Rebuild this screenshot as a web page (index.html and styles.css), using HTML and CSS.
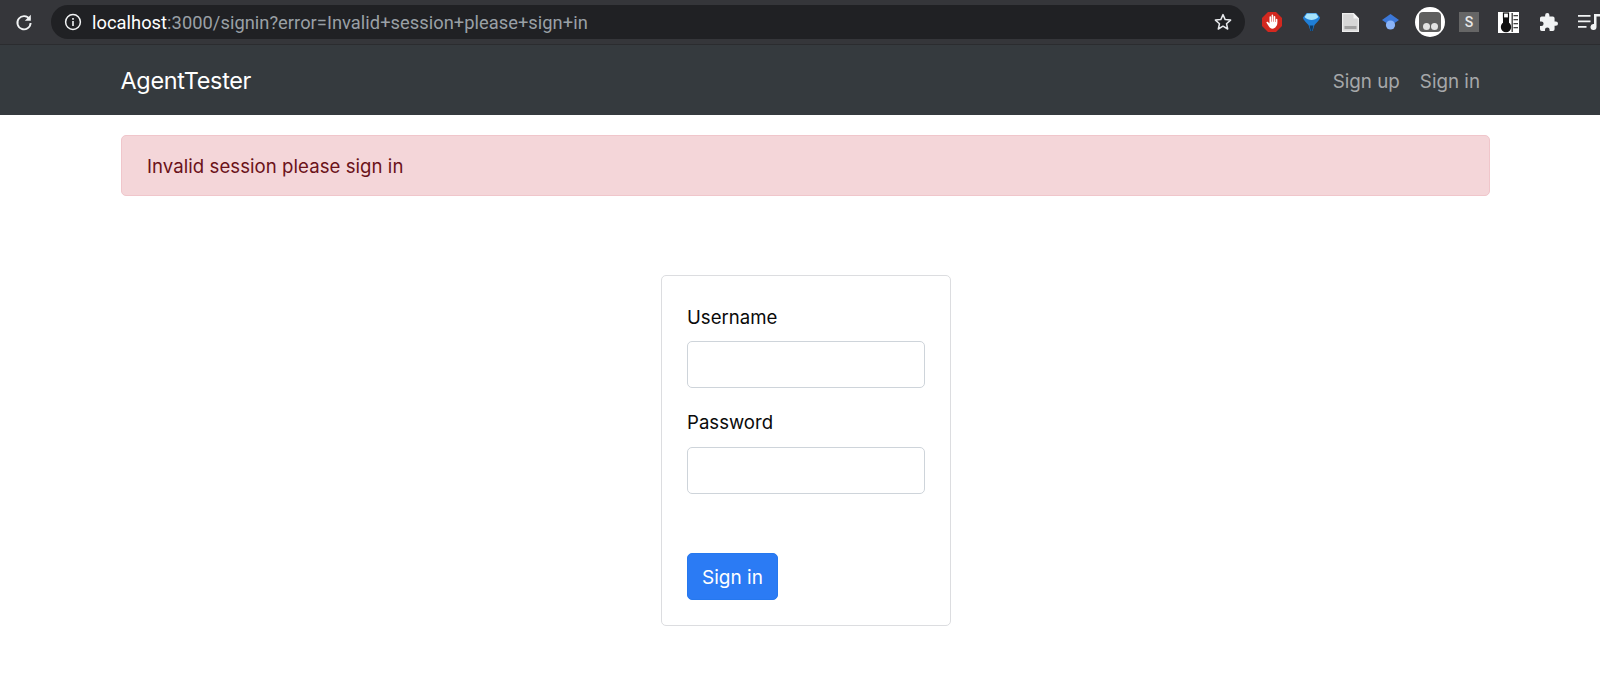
FILE: index.html
```html
<!DOCTYPE html>
<html lang="en">
<head>
<meta charset="utf-8">
<title>AgentTester</title>
<link rel="stylesheet" href="styles.css">
</head>
<body>
<div class="toolbar">
  <svg class="reload" width="20" height="20" viewBox="0 0 20 20"><path d="M15.6 7.2A6.6 6.6 0 1 0 16.6 11" fill="none" stroke="#f1f3f4" stroke-width="1.9"/><path d="M16.8 2.8v6h-6z" fill="#f1f3f4"/></svg>
  <div class="omnibox">
    <svg class="info" width="18" height="18" viewBox="0 0 18 18"><circle cx="9" cy="9" r="7.4" fill="none" stroke="#f1f3f4" stroke-width="1.5"/><rect x="8.2" y="8" width="1.6" height="5" fill="#f1f3f4"/><rect x="8.2" y="5" width="1.6" height="1.8" fill="#f1f3f4"/></svg>
    <div class="url"><span class="host">localhost</span>:3000/signin?error=Invalid+session+please+sign+in</div>
    <svg class="star" width="20" height="20" viewBox="0 0 20 20"><path d="M10 2.6l2.2 5 5.4.5-4.1 3.6 1.2 5.3L10 14.2 5.3 17l1.2-5.3L2.4 8.1l5.4-.5z" fill="none" stroke="#e8eaed" stroke-width="1.5" stroke-linejoin="round"/></svg>
  </div>
  <div class="extensions">
    <svg class="ext ext-stop" width="20" height="20" viewBox="0 0 20 20"><path d="M6 0h8l6 6v8l-6 6H6l-6-6V6z" fill="#d3281f"/><path d="M14 14.500c1-1 1.400-2.500 1.400-4.500V7.500a.8.800 0 0 0-1.600 0v2.500h-.5V4.700a.8.800 0 0 0-1.600 0v5h-.5V3.400a.8.800 0 0 0-1.600 0v6.300h-.5V5a.8.800 0 0 0-1.600 0v6.500L6 10c-.8-.8-2-.1-1.500.8l2.600 3.900c.9 1.300 2 2 3.400 2 1.500 0 2.700-.9 3.500-2.200z" fill="#fff"/></svg>
    <svg class="ext ext-gem" width="17" height="18" viewBox="0 0 17 18"><path d="M3.500 0h10L17 4.500c0 2-3 5-5.500 7.500L9.500 18h-2L5.500 12C3 9.500 0 6.500 0 4.500z" fill="#1f7fd8"/><path d="M4 .5h9l2.500 3.500c-1.500 2-5 3-7 3s-5.500-1-7-3z" fill="#a6e3fb"/><path d="M6.500 12.500h4L9.200 18H7.800z" fill="#0c3a66"/></svg>
    <svg class="ext ext-doc" width="17" height="19" viewBox="0 0 17 19"><path d="M.6.6h11l4.800 4.800v13H.6z" fill="#d6d6d6" stroke="#ededed" stroke-width="1.200"/><path d="M11.500.6v5h5z" fill="#f6f6f6"/><rect x="2.500" y="13" width="12" height="3" fill="#a0a0a0"/></svg>
    <svg class="ext ext-cap" width="17" height="16" viewBox="0 0 17 16"><path d="M8.500 0L17 6l-5 3.500H5L0 6z" fill="#3c78d8"/><circle cx="8.500" cy="11" r="4.600" fill="#8ab4f8"/></svg>
    <div class="tampermonkey"><div class="tm-face"><span class="tm-eye"></span><span class="tm-eye"></span></div></div>
    <div class="ext-s">S</div>
    <svg class="ext ext-thermo" width="21" height="21" viewBox="0 0 21 21"><rect width="21" height="21" fill="#fff"/><rect x="13.500" y="1" width="1.400" height="19" fill="#444"/><rect x="15.500" y="3" width="4.500" height="1.300" fill="#444"/><rect x="15.500" y="7" width="4.500" height="1.300" fill="#444"/><rect x="15.500" y="11" width="4.500" height="1.300" fill="#444"/><rect x="15.500" y="15" width="4.500" height="1.300" fill="#444"/><rect x="5.500" y="1" width="5" height="5" fill="none" stroke="#111" stroke-width="1.200"/><rect x="5" y="6" width="6" height="7" fill="#111"/><circle cx="8" cy="15" r="5.200" fill="#111"/></svg>
    <svg class="ext ext-puzzle" width="18" height="18" viewBox="2 1 21 21"><path d="M20.500 11H19V7a2 2 0 0 0-2-2h-4V3.500a2.500 2.500 0 0 0-5 0V5H4a2 2 0 0 0-2 2v3.800h1.500a2.700 2.700 0 0 1 0 5.400H2V20a2 2 0 0 0 2 2h3.800v-1.500a2.700 2.700 0 0 1 5.400 0V22H17a2 2 0 0 0 2-2v-4h1.500a2.500 2.500 0 0 0 0-5z" fill="#f1f3f4"/></svg>
    <svg class="ext ext-music" width="22" height="16" viewBox="0 0 22 16"><path d="M0 1h12.500v1.800H0zM0 6.500h12.500v1.800H0zM0 12h8.500v1.800H0z" fill="#f1f3f4"/><path d="M16 0h6v2.600h-3.500V13a3 3 0 1 1-2.500-3z" fill="#f1f3f4"/></svg>
  </div>
</div>
<nav class="navbar">
  <a class="brand" href="#">AgentTester</a>
  <div class="nav-links">
    <a class="nav-link" href="#">Sign up</a>
    <a class="nav-link" href="#">Sign in</a>
  </div>
</nav>
<main class="content">
  <div class="alert">Invalid session please sign in</div>
  <form class="card">
    <label class="field-label" for="username">Username</label>
    <input class="field" id="username" type="text">
    <label class="field-label second" for="password">Password</label>
    <input class="field" id="password" type="password">
    <button class="submit" type="button">Sign in</button>
  </form>
</main>
</body>
</html>
```
FILE: styles.css
```css
* { box-sizing: border-box; }
html, body { margin: 0; padding: 0; }
body {
  width: 1600px;
  height: 680px;
  overflow: hidden;
  background: #fff;
  font-family: Inter, "Liberation Sans", sans-serif;
  font-size: 18.6px;
  color: #111;
}
.toolbar {
  height: 45px;
  background: #35363a;
  border-bottom: 1px solid #2b2c2f;
  display: flex;
  align-items: center;
  padding-left: 14px;
}
.reload { flex: none; }
.omnibox {
  margin-left: 17px;
  width: 1194px;
  height: 34px;
  border-radius: 17px;
  background: #202124;
  display: flex;
  align-items: center;
  padding: 0 12px 0 13px;
  flex: none;
}
.info { flex: none; }
.url {
  margin-left: 10px;
  flex: 1;
  font-family: Roboto, sans-serif;
  font-size: 18.3px;
  letter-spacing: 0.04px;
  color: #9aa0a6;
  white-space: nowrap;
}
.host { color: #fff; }
.extensions {
  display: flex;
  align-items: center;
  margin-left: 17px;
}
.ext { flex: none; }
.ext-stop { margin-right: 21px; }
.ext-gem { margin-right: 22px; }
.ext-doc { margin-right: 23px; }
.ext-cap { margin-right: 16px; }
.tampermonkey {
  flex: none;
  width: 30px;
  height: 30px;
  border-radius: 50%;
  background: #fff;
  display: flex;
  align-items: center;
  justify-content: center;
  margin-right: 14px;
}
.tm-face {
  width: 22px;
  height: 20px;
  border-radius: 4px;
  background: #5f5f5f;
  display: flex;
  align-items: flex-end;
  justify-content: center;
  gap: 1px;
  padding-bottom: 2px;
}
.tm-eye { width: 7px; height: 7px; border-radius: 50%; background: #e4e4e4; }
.ext-s {
  flex: none;
  width: 20px;
  height: 20px;
  background: #666;
  color: #e8e8e8;
  font-family: Roboto, sans-serif;
  font-size: 14px;
  font-weight: 500;
  line-height: 20px;
  text-align: center;
  margin-right: 19px;
}
.ext-thermo { margin-right: 21px; }
.ext-puzzle { margin-right: 20px; }
.navbar {
  height: 70px;
  background: #353a3e;
  display: flex;
  align-items: center;
  justify-content: space-between;
  padding: 2px 120px 0 120.5px;
}
.brand { color: #fff; text-decoration: none; font-size: 23.4px; letter-spacing: -0.3px; margin-bottom: 2px; }
.nav-links { display: flex; gap: 20px; margin-top: 1px; }
.nav-link { color: #a6a8aa; text-decoration: none; font-size: 18.8px; }
.content { padding: 20px 110px 0 121px; }
.alert {
  height: 61px;
  background: #f4d6d9;
  border: 1px solid #f0c6cb;
  border-radius: 5px;
  color: #6b1219;
  display: flex;
  align-items: center;
  padding-left: 25px;
  letter-spacing: 0.05px;
}
.card {
  width: 290px;
  height: 351px;
  margin: 79px 0 0 540px;
  border: 1px solid #dcdde0;
  border-radius: 5px;
  padding: 30px 25px 0;
  display: flex;
  flex-direction: column;
  align-items: flex-start;
}
.field-label { line-height: 22px; color: #0a0a0a; margin-bottom: 13px; }
.field-label.second { margin-top: 23px; margin-bottom: 14px; }
.field {
  width: 238px;
  height: 47px;
  border: 1px solid #ced4da;
  border-radius: 5px;
  background: #fff;
}
.submit {
  margin-top: 59px;
  width: 91px;
  height: 47px;
  border: 1px solid #2678ee;
  border-radius: 5px;
  background: #2b7bf4;
  color: #fff;
  font-family: Inter, sans-serif;
  font-size: 19px;
  padding: 1px 0 0;
}
```
